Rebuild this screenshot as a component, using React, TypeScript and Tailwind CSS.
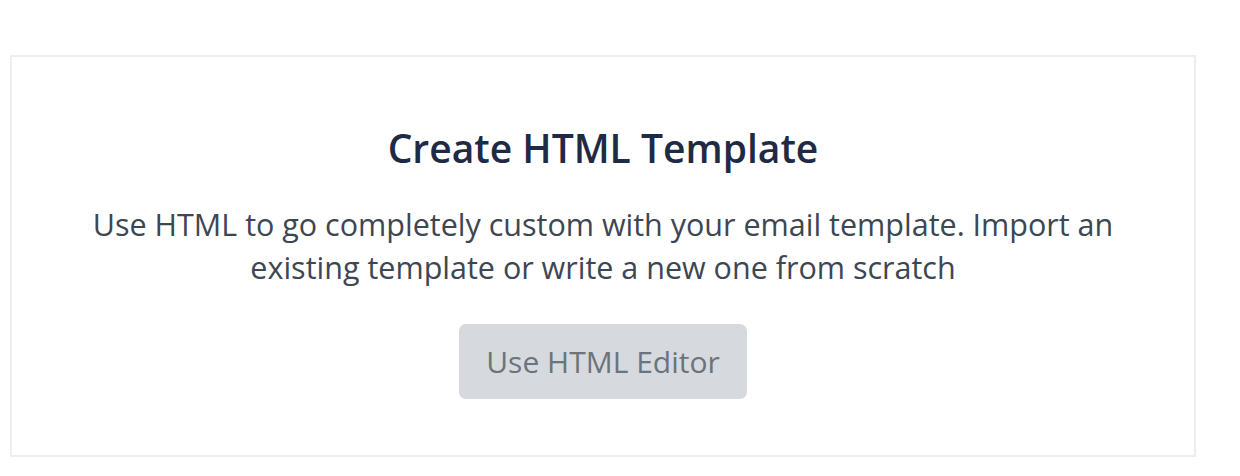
import React from "react";

export default function App() {
  return (
    <div className="w-[1240px] h-[476px] bg-white pt-[55px] pl-[10px]" style={{ fontFamily: '"Open Sans", sans-serif' }}>
      <div className="w-[1186px] h-[402px] border-2 border-[#eceef0] flex flex-col items-center pt-[66px]">
        <h1 className="text-[39px] leading-[50px] font-semibold text-[#1f2a44]">Create HTML Template</h1>
        <p className="mt-[30px] text-[30.5px] leading-[43px] text-[#3d4652] text-center w-[1050px]">
          Use HTML to go completely custom with your email template. Import an existing template or write a new one from scratch
        </p>
        <button className="mt-[35px] w-[288px] h-[75px] rounded-[7px] bg-[#d6dadf] text-[30px] text-[#6d737a]">
          Use HTML Editor
        </button>
      </div>
    </div>
  );
}
